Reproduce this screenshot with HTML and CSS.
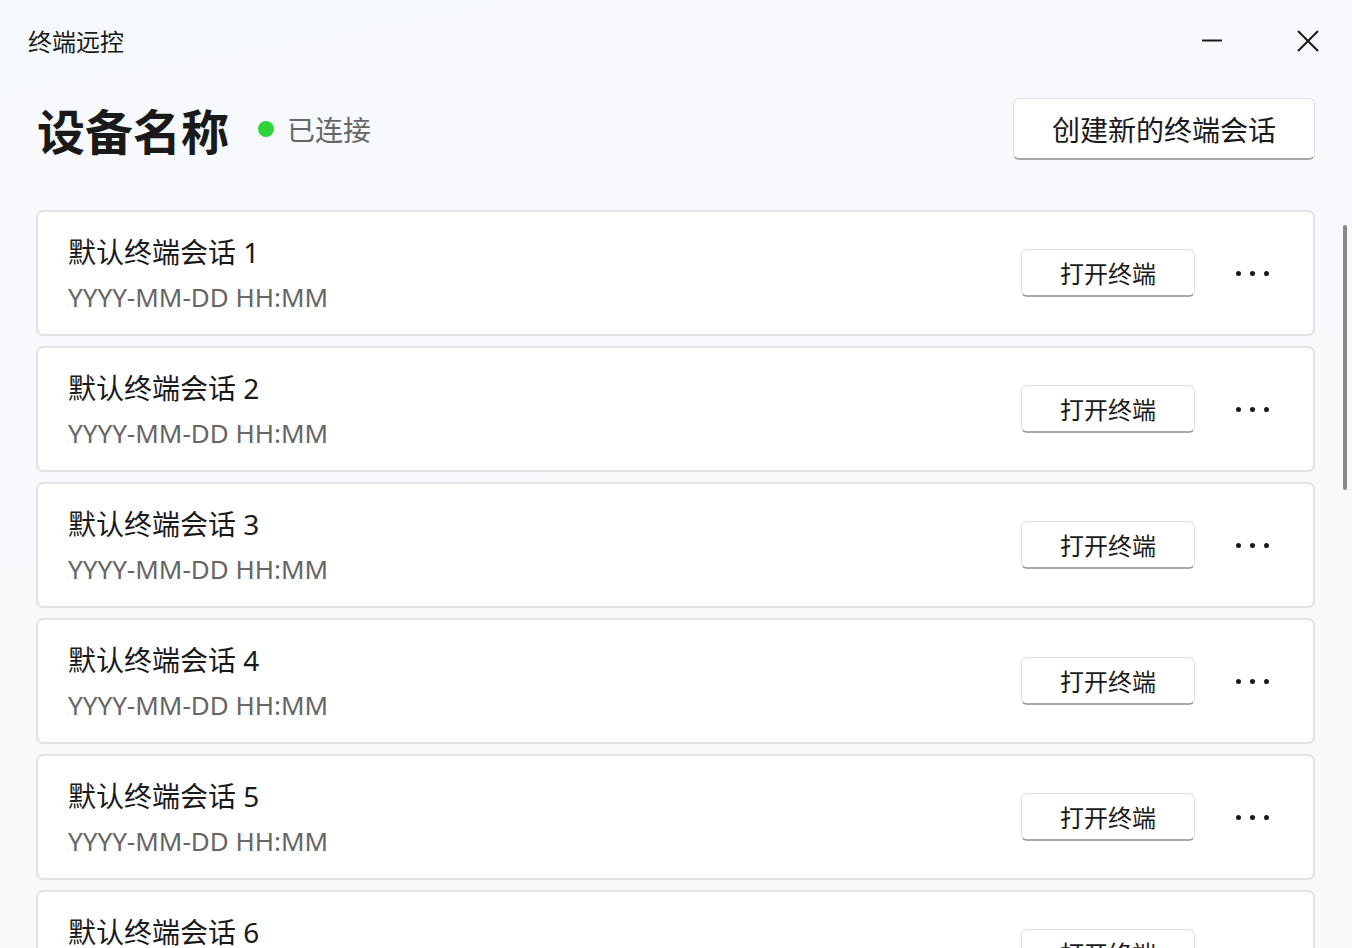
FILE: index.html
```html
<!DOCTYPE html>
<html lang="zh-CN">
<head>
<meta charset="utf-8">
<title>终端远控</title>
<link rel="stylesheet" href="styles.css">
</head>
<body>
<div class="window">
  <div class="titlebar">
    <span class="app-title">终端远控</span>
    <div class="win-controls">
      <button class="win-btn" aria-label="最小化">
        <svg width="22" height="22" viewBox="0 0 22 22"><path d="M1 10.5H21" stroke="#1a1a1a" stroke-width="2"/></svg>
      </button>
      <button class="win-btn" aria-label="关闭">
        <svg width="24" height="24" viewBox="0 0 24 24"><path d="M2 2L22 22M22 2L2 22" stroke="#1a1a1a" stroke-width="2"/></svg>
      </button>
    </div>
  </div>
  <div class="header">
    <h1 class="device-name">设备名称</h1>
    <span class="status-dot"></span>
    <span class="status-text">已连接</span>
    <div class="spacer"></div>
    <button class="btn btn-create">创建新的终端会话</button>
  </div>
  <div class="list">
    <div class="card">
      <div class="card-info"><div class="card-title">默认终端会话 1</div><div class="card-date">YYYY-MM-DD HH:MM</div></div>
      <button class="btn btn-open">打开终端</button>
      <button class="more" aria-label="更多"><i></i><i></i><i></i></button>
    </div>
    <div class="card">
      <div class="card-info"><div class="card-title">默认终端会话 2</div><div class="card-date">YYYY-MM-DD HH:MM</div></div>
      <button class="btn btn-open">打开终端</button>
      <button class="more" aria-label="更多"><i></i><i></i><i></i></button>
    </div>
    <div class="card">
      <div class="card-info"><div class="card-title">默认终端会话 3</div><div class="card-date">YYYY-MM-DD HH:MM</div></div>
      <button class="btn btn-open">打开终端</button>
      <button class="more" aria-label="更多"><i></i><i></i><i></i></button>
    </div>
    <div class="card">
      <div class="card-info"><div class="card-title">默认终端会话 4</div><div class="card-date">YYYY-MM-DD HH:MM</div></div>
      <button class="btn btn-open">打开终端</button>
      <button class="more" aria-label="更多"><i></i><i></i><i></i></button>
    </div>
    <div class="card">
      <div class="card-info"><div class="card-title">默认终端会话 5</div><div class="card-date">YYYY-MM-DD HH:MM</div></div>
      <button class="btn btn-open">打开终端</button>
      <button class="more" aria-label="更多"><i></i><i></i><i></i></button>
    </div>
    <div class="card">
      <div class="card-info"><div class="card-title">默认终端会话 6</div><div class="card-date">YYYY-MM-DD HH:MM</div></div>
      <button class="btn btn-open">打开终端</button>
      <button class="more" aria-label="更多"><i></i><i></i><i></i></button>
    </div>
  </div>
  <div class="scrollbar"></div>
</div>
</body>
</html>
```

FILE: styles.css
```css
* { box-sizing: border-box; }
html, body {
  margin: 0;
  padding: 0;
  width: 1352px;
  height: 948px;
  overflow: hidden;
}
body {
  font-family: "Noto Sans", "Noto Sans CJK SC", sans-serif;
  color: #1a1a1a;
  background: linear-gradient(170deg, #f6f9fc 0%, #f9f9fc 60%, #f9f9fb 100%);
}
.window {
  position: relative;
  width: 1352px;
  height: 948px;
  overflow: hidden;
}
.titlebar {
  height: 82px;
  display: flex;
  align-items: center;
  padding-left: 28px;
}
.app-title {
  font-family: "Noto Sans CJK SC", sans-serif;
  font-size: 24px;
  line-height: 1;
  color: #1a1a1a;
}
.win-controls {
  margin-left: auto;
  display: flex;
  align-items: center;
  padding-right: 32px;
  gap: 73px;
}
.win-btn {
  border: 0;
  background: none;
  padding: 0;
  display: flex;
  align-items: center;
  justify-content: center;
}
.header {
  height: 94px;
  display: flex;
  align-items: center;
  padding-left: 37px;
  padding-right: 37px;
}
.device-name {
  margin: 0;
  font-family: "Noto Sans CJK SC", sans-serif;
  font-size: 48px;
  font-weight: 700;
  line-height: 1;
  color: #1a1a1a;
}
.status-dot {
  width: 16px;
  height: 16px;
  border-radius: 50%;
  background: #2fd43a;
  margin-left: 29px;
}
.status-text {
  margin-left: 13px;
  font-family: "Noto Sans CJK SC", sans-serif;
  font-size: 28px;
  color: #666666;
  line-height: 1;
}
.spacer { flex: 1; }
.btn {
  font-family: "Noto Sans CJK SC", sans-serif;
  background: #ffffff;
  color: #1a1a1a;
  border: 1.5px solid #e0e0e0;
  border-bottom: 2px solid #a8a8a8;
  border-radius: 6px;
  display: flex;
  align-items: center;
  justify-content: center;
  padding: 0;
}
.btn-create {
  width: 302px;
  height: 62px;
  font-size: 28px;
}
.list {
  margin-top: 34px;
  padding: 0 37px 0 36px;
  display: flex;
  flex-direction: column;
  gap: 10px;
}
.card {
  flex: none;
  height: 126px;
  background: #ffffff;
  border: 2px solid #e3e3e3;
  border-radius: 7px;
  display: flex;
  align-items: center;
  padding-left: 30px;
  padding-right: 37px;
}
.card-info {
  flex: 1;
  display: flex;
  flex-direction: column;
  padding-top: 2px;
}
.card-title {
  font-family: "Noto Sans", "Noto Sans CJK SC", sans-serif;
  font-size: 28px;
  line-height: 36px;
  color: #1a1a1a;
}
.card-date {
  font-family: "Noto Sans", "Noto Sans CJK SC", sans-serif;
  font-size: 26px;
  line-height: 36px;
  margin-top: 9px;
  color: #666666;
}
.btn-open {
  width: 174px;
  height: 48px;
  font-size: 24px;
}
.more {
  width: 48px;
  height: 48px;
  margin-left: 33px;
  border: 0;
  background: none;
  padding: 0;
  display: flex;
  align-items: center;
  justify-content: center;
  gap: 9px;
}
.more i {
  display: block;
  width: 5px;
  height: 5px;
  border-radius: 50%;
  background: #1a1a1a;
}
.scrollbar {
  position: absolute;
  left: 1343px;
  top: 225px;
  width: 4px;
  height: 265px;
  border-radius: 2px;
  background: #8a8a8a;
}
```
